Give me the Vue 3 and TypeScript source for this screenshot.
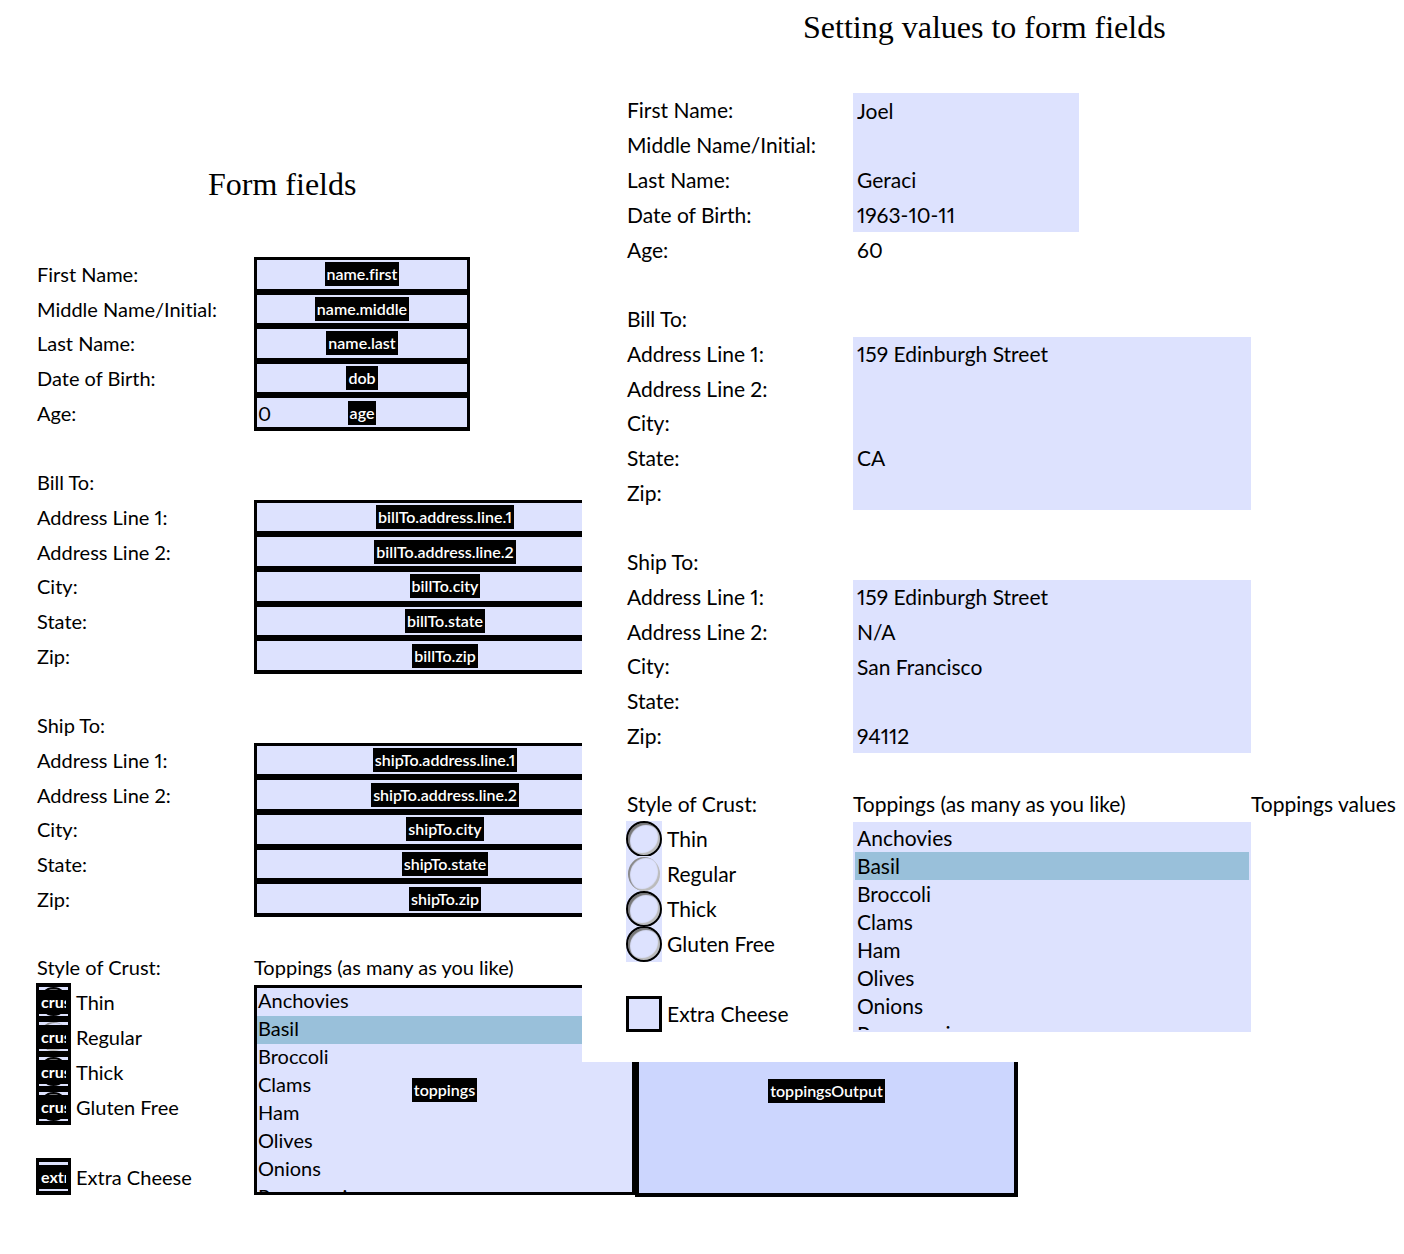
<script setup lang="ts">
import { reactive } from 'vue'

interface Field {
  name: string
  label: string
  blank: string
  filled: string
}

interface Group {
  key: string
  title: string
  fields: Field[]
}

const groups: Group[] = [
  {
    key: 'name',
    title: '',
    fields: [
      { name: 'name.first', label: 'First Name:', blank: '', filled: 'Joel' },
      { name: 'name.middle', label: 'Middle Name/Initial:', blank: '', filled: '' },
      { name: 'name.last', label: 'Last Name:', blank: '', filled: 'Geraci' },
      { name: 'dob', label: 'Date of Birth:', blank: '', filled: '1963-10-11' },
      { name: 'age', label: 'Age:', blank: '0', filled: '60' },
    ],
  },
  {
    key: 'bill',
    title: 'Bill To:',
    fields: [
      { name: 'billTo.address.line.1', label: 'Address Line 1:', blank: '', filled: '159 Edinburgh Street' },
      { name: 'billTo.address.line.2', label: 'Address Line 2:', blank: '', filled: '' },
      { name: 'billTo.city', label: 'City:', blank: '', filled: '' },
      { name: 'billTo.state', label: 'State:', blank: '', filled: 'CA' },
      { name: 'billTo.zip', label: 'Zip:', blank: '', filled: '' },
    ],
  },
  {
    key: 'ship',
    title: 'Ship To:',
    fields: [
      { name: 'shipTo.address.line.1', label: 'Address Line 1:', blank: '', filled: '159 Edinburgh Street' },
      { name: 'shipTo.address.line.2', label: 'Address Line 2:', blank: '', filled: 'N/A' },
      { name: 'shipTo.city', label: 'City:', blank: '', filled: 'San Francisco' },
      { name: 'shipTo.state', label: 'State:', blank: '', filled: '' },
      { name: 'shipTo.zip', label: 'Zip:', blank: '', filled: '94112' },
    ],
  },
]

const crusts = ['Thin', 'Regular', 'Thick', 'Gluten Free']
const toppings = ['Anchovies', 'Basil', 'Broccoli', 'Clams', 'Ham', 'Olives', 'Onions', 'Pepperoni']

const blankValues = reactive<Record<string, string>>({})
const filledValues = reactive<Record<string, string>>({})
for (const group of groups) {
  for (const field of group.fields) {
    blankValues[field.name] = field.blank
    filledValues[field.name] = field.filled
  }
}
const picked = reactive({ blank: ['Basil'], filled: ['Basil'] })
</script>

<template>
  <main class="page">
    <form class="sheet names" @submit.prevent>
      <h1>Form fields</h1>
      <div v-for="group in groups" :key="group.key" class="group" :class="group.key">
        <div v-if="group.title" class="row">{{ group.title }}</div>
        <div v-for="field in group.fields" :key="field.name" class="row">
          <label :for="'blank-' + field.name">{{ field.label }}</label>
          <div class="cell">
            <input :id="'blank-' + field.name" v-model="blankValues[field.name]" type="text" />
            <span class="tag">{{ field.name }}</span>
          </div>
        </div>
      </div>
      <div class="order">
        <div class="crust">
          <div class="head">Style of Crust:</div>
          <label v-for="crust in crusts" :key="crust" class="choice">
            <span class="mark">
              <input type="radio" name="blank-crust" :class="{ faint: crust === 'Regular' }" />
              <span class="tag">crust</span>
            </span>
            <span>{{ crust }}</span>
          </label>
          <label class="choice extra">
            <span class="mark">
              <input type="checkbox" />
              <span class="tag">extra</span>
            </span>
            <span>Extra Cheese</span>
          </label>
        </div>
        <div class="toppings">
          <label class="head" for="blank-toppings">Toppings (as many as you like)</label>
          <div class="cell">
            <select id="blank-toppings" v-model="picked.blank" multiple>
              <option v-for="topping in toppings" :key="topping">{{ topping }}</option>
            </select>
            <span class="tag">toppings</span>
          </div>
        </div>
        <div class="output">
          <div class="head"></div>
          <div class="cell">
            <textarea aria-label="toppingsOutput"></textarea>
            <span class="tag">toppingsOutput</span>
          </div>
        </div>
      </div>
    </form>

    <form class="sheet values" @submit.prevent>
      <h1>Setting values to form fields</h1>
      <div v-for="group in groups" :key="group.key" class="group" :class="group.key">
        <div v-if="group.title" class="row">{{ group.title }}</div>
        <div v-for="field in group.fields" :key="field.name" class="row">
          <label :for="'filled-' + field.name">{{ field.label }}</label>
          <div class="cell">
            <input
              :id="'filled-' + field.name"
              v-model="filledValues[field.name]"
              type="text"
              :class="{ plain: field.name === 'age' }"
            />
          </div>
        </div>
      </div>
      <div class="order">
        <div class="crust">
          <div class="head">Style of Crust:</div>
          <label v-for="crust in crusts" :key="crust" class="choice">
            <span class="mark">
              <input type="radio" name="filled-crust" :class="{ faint: crust === 'Regular' }" />
            </span>
            <span>{{ crust }}</span>
          </label>
          <label class="choice extra">
            <span class="mark"><input type="checkbox" /></span>
            <span>Extra Cheese</span>
          </label>
        </div>
        <div class="toppings">
          <label class="head" for="filled-toppings">Toppings (as many as you like)</label>
          <div class="cell">
            <select id="filled-toppings" v-model="picked.filled" multiple>
              <option v-for="topping in toppings" :key="topping">{{ topping }}</option>
            </select>
          </div>
        </div>
        <div class="output">
          <div class="head">Toppings values</div>
        </div>
      </div>
    </form>
  </main>
</template>

<style>
body {
  background: #fff;
}
</style>

<style scoped>
.page {
  display: grid;
  grid-template-columns: 582px minmax(0, 1fr);
  align-items: start;
  padding-bottom: 56px;
  overflow: hidden;
  color: #000;
  font-family: Lato, 'Noto Sans', sans-serif;
  font-variant-ligatures: no-common-ligatures;
  font-variant-numeric: proportional-nums;
  line-height: 28px;
  white-space: nowrap;
}

.page * {
  box-sizing: border-box;
}

.sheet {
  display: grid;
  grid-row: 1;
  gap: 35px;
}

.names {
  grid-column: 1 / 3;
  padding: 166px 0 0 36px;
  font-size: 20px;
}

/* The filled-in sheet lies over the right part of the first one. */
.values {
  grid-column: 2;
  z-index: 1;
  padding: 9px 0 30px 45px;
  background: #fff;
  font-size: 21px;
}

h1 {
  margin: 0;
  font-family: 'Liberation Serif', serif;
  font-size: 32px;
  font-weight: 400;
  font-variant-ligatures: normal;
  line-height: 36px;
}

.names h1 {
  padding-left: 172px;
  margin-bottom: 20px;
}

.values h1 {
  padding-left: 176px;
  margin-bottom: 13px;
}

.group {
  display: grid;
  grid-auto-rows: 1fr;
  height: 208px;
}

.group.name {
  height: 174px;
}

.names .group.name {
  height: 173px;
}

.row {
  display: grid;
  align-items: center;
}

.names .row,
.names .crust .head {
  padding-left: 1px;
}

.names .row {
  grid-template-columns: 217px 382px;
}

.names .name .row {
  grid-template-columns: 217px 216px;
}

.values .row {
  grid-template-columns: 226px 398px;
}

.values .name .row {
  grid-template-columns: 226px 226px;
}

.cell {
  display: grid;
  height: 100%;
}

.cell > * {
  grid-area: 1 / 1;
}

input,
select,
textarea {
  margin: 0;
  border: 0;
  border-radius: 0;
  outline: 0;
  background: #dde2fe;
  color: #000;
  font: inherit;
  font-variant-numeric: proportional-nums;
}

input[type='text'] {
  width: 100%;
  height: 100%;
  padding: 0 4px;
}

input.plain {
  background: transparent;
}

.names input[type='text'] {
  padding: 0 1px;
  border: 3px solid #000;
  box-shadow: 0 1px #000;
}

.tag {
  z-index: 1;
  place-self: center;
  padding: 0 2px;
  background: #000;
  color: #fff;
  font-size: 16px;
  font-weight: 600;
  line-height: 24px;
  pointer-events: none;
}

.order {
  display: grid;
}

.names .order {
  grid-template-columns: 218px 381px 383px;
}

.values .order {
  grid-template-columns: 226px 398px 1fr;
}

.head {
  display: block;
  height: 34px;
  line-height: 32px;
}

.crust {
  display: grid;
  align-content: start;
}

.choice {
  display: flex;
  align-items: center;
  gap: 5px;
  height: 35px;
  line-height: 30px;
}

.choice > span:last-child {
  padding-bottom: 2px;
}

.choice.extra {
  margin-top: 35px;
}

.mark {
  display: grid;
  flex: none;
  width: 35px;
  height: 37px;
  margin-top: -2px;
}

.mark > * {
  grid-area: 1 / 1;
}

.names .mark {
  overflow: hidden;
  border: 4px solid #000;
  border-width: 4px 3px;
  background: #dde2fe;
}

.names .mark .tag {
  width: 29px;
  overflow: hidden;
  border-right: 2px solid #000;
  font-weight: 700;
}

.mark input {
  width: 100%;
  height: 100%;
  appearance: none;
}

.mark input[type='radio'] {
  border: 2px solid #000;
  border-radius: 50%;
  box-shadow: inset 2px 2px 1px #777, inset -2px -2px 1px #bbb;
}

.mark input.faint {
  border: 0;
  box-shadow: inset 2px 1px 1px #888, inset -2px -2px 1px #bbb;
}

.values .mark {
  width: 36px;
  height: 36px;
  margin-left: -1px;
  background: #dde2fe;
}

.values .mark input[type='checkbox'] {
  border: 3px solid #000;
}

.values .mark input.faint {
  place-self: center;
  width: 32px;
  height: 34px;
}

.toppings .cell,
.output .cell {
  height: 210px;
}

select {
  width: 100%;
  height: 210px;
  padding: 0;
  border: 2px solid #dde2fe;
  overflow: hidden;
}

.names select {
  border: 3px solid #000;
}

option {
  min-height: 28px;
  padding: 1px 2px;
  line-height: 26px;
}

.names option {
  padding: 0 1px;
  line-height: 28px;
}

option:checked {
  background: #99c0da linear-gradient(#99c0da, #99c0da);
  color: #000;
}

textarea {
  width: 100%;
  height: 212px;
  border: 4px solid #000;
  background: #ccd6fe;
  resize: none;
}
</style>
